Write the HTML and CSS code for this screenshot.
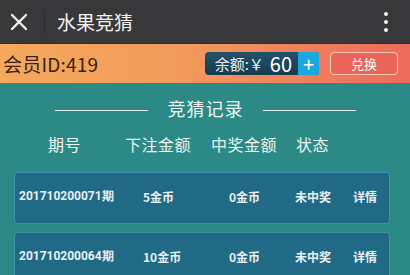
FILE: index.html
```html
<!DOCTYPE html>
<html>
<head>
  <meta charset="utf-8">
  <title>水果竞猜</title>
  <link rel="stylesheet" href="styles.css">
</head>
<body>
  <div class="topbar">
    <svg class="close" width="18" height="18" viewBox="0 0 18 18">
      <path d="M2 2 L16 16 M16 2 L2 16" stroke="#f2f2f2" stroke-width="2.4" stroke-linecap="round"/>
    </svg>
    <span class="sep"></span>
    <span class="title">水果竞猜</span>
    <span class="more"><i></i><i></i><i></i></span>
  </div>

  <div class="member">
    <span class="uid">会员ID:419</span>
    <div class="balance">
      <span class="label">余额:￥</span><span class="amount">60</span><span class="plus">+</span>
    </div>
    <span class="exchange">兑换</span>
  </div>

  <div class="records">
    <div class="heading">
      <span class="line"></span>
      <span class="htext">竞猜记录</span>
      <span class="line"></span>
    </div>
    <div class="cols">
      <span class="c1">期号</span>
      <span class="c2">下注金额</span>
      <span class="c3">中奖金额</span>
      <span class="c4">状态</span>
    </div>
    <div class="row">
      <span class="r1">201710200071期</span>
      <span class="r2">5金币</span>
      <span class="r3">0金币</span>
      <span class="r4">未中奖</span>
      <span class="r5">详情</span>
    </div>
    <div class="row">
      <span class="r1">201710200064期</span>
      <span class="r2">10金币</span>
      <span class="r3">0金币</span>
      <span class="r4">未中奖</span>
      <span class="r5">详情</span>
    </div>
  </div>
</body>
</html>
```

FILE: styles.css
```css
body {
  margin: 0;
  font-family: "Noto Sans CJK SC", "Noto Sans", sans-serif;
  background-color: #2b8a85;
  overflow: hidden;
}

.topbar {
  height: 43px;
  background-color: #38383b;
  border-bottom: 1px solid #3a2a20;
  display: flex;
  align-items: center;
  color: #f2f2f2;
}

.close {
  margin-left: 10px;
}

.sep {
  width: 1px;
  height: 24px;
  background-color: #2c2c2e;
  margin-left: 16px;
}

.title {
  margin-left: 12px;
  font-size: 19px;
  line-height: 1;
}

.more {
  margin-left: auto;
  margin-right: 22px;
  display: flex;
  flex-direction: column;
  gap: 4px;
}

.more i {
  display: block;
  width: 4px;
  height: 4px;
  border-radius: 50%;
  background-color: #f2f2f2;
}

.member {
  height: 39px;
  background: linear-gradient(to right, #f4a95b, #f29a5c 45%, #ef7b5c 80%, #ee6a5c);
  display: flex;
  align-items: center;
  padding: 0 12px 0 3px;
}

.uid {
  font-size: 19px;
  letter-spacing: 0.2px;
  color: #3a2210;
}

.balance {
  margin-left: auto;
  height: 23px;
  display: flex;
  align-items: center;
  background: linear-gradient(#24516a, #163b50);
  border-radius: 4px;
  color: #fff;
  margin-right: 11px;
}

.balance .label {
  font-size: 15px;
  line-height: 23px;
  padding-left: 10px;
  color: #e8eef2;
}

.balance .amount {
  font-size: 20px;
  line-height: 23px;
  margin-left: 6px;
  margin-right: 6px;
}

.balance .plus {
  width: 21px;
  height: 23px;
  background-color: #1aa8e0;
  border-radius: 0 4px 4px 0;
  font-size: 20px;
  line-height: 23px;
  text-align: center;
}

.exchange {
  width: 66px;
  height: 21px;
  border: 1px solid #f8c8b8;
  border-radius: 4px;
  background-color: #ea645a;
  color: #fff;
  font-size: 13px;
  text-align: center;
  line-height: 21px;
}

.records {
  padding-top: 10px;
  height: 182px;
  overflow: hidden;
  color: #eef5f3;
}

.heading {
  display: flex;
  align-items: center;
  justify-content: center;
  height: 30px;
}

.heading .line {
  width: 93px;
  height: 1px;
  background-color: #e6efec;
  margin-top: 4px;
}

.htext {
  font-size: 18px;
  letter-spacing: 1px;
  margin: 0 19px 0 20px;
}

.cols {
  display: flex;
  height: 36px;
  align-items: center;
  font-size: 16px;
  letter-spacing: 0.5px;
  margin: 3px 0 10px;
}

.cols .c1 { margin-left: 48px; }
.cols .c2 { margin-left: 44px; }
.cols .c3 { margin-left: 20px; }
.cols .c4 { margin-left: 19px; }

.row {
  margin: 0 20px 8px 14px;
  height: 52px;
  background-color: #216a85;
  border: 1px solid #3d8fae;
  border-radius: 3px;
  display: flex;
  align-items: center;
  font-size: 12px;
  font-weight: bold;
  color: #e8f0f3;
  padding-bottom: 4px;
  box-sizing: border-box;
}

.row span { display: block; }
.r1 { margin-left: 4px; font-family: "Roboto", sans-serif; width: 124px; }
.r2 { width: 86px; }
.r3 { width: 66px; }
.r4 { width: 58px; }
```
